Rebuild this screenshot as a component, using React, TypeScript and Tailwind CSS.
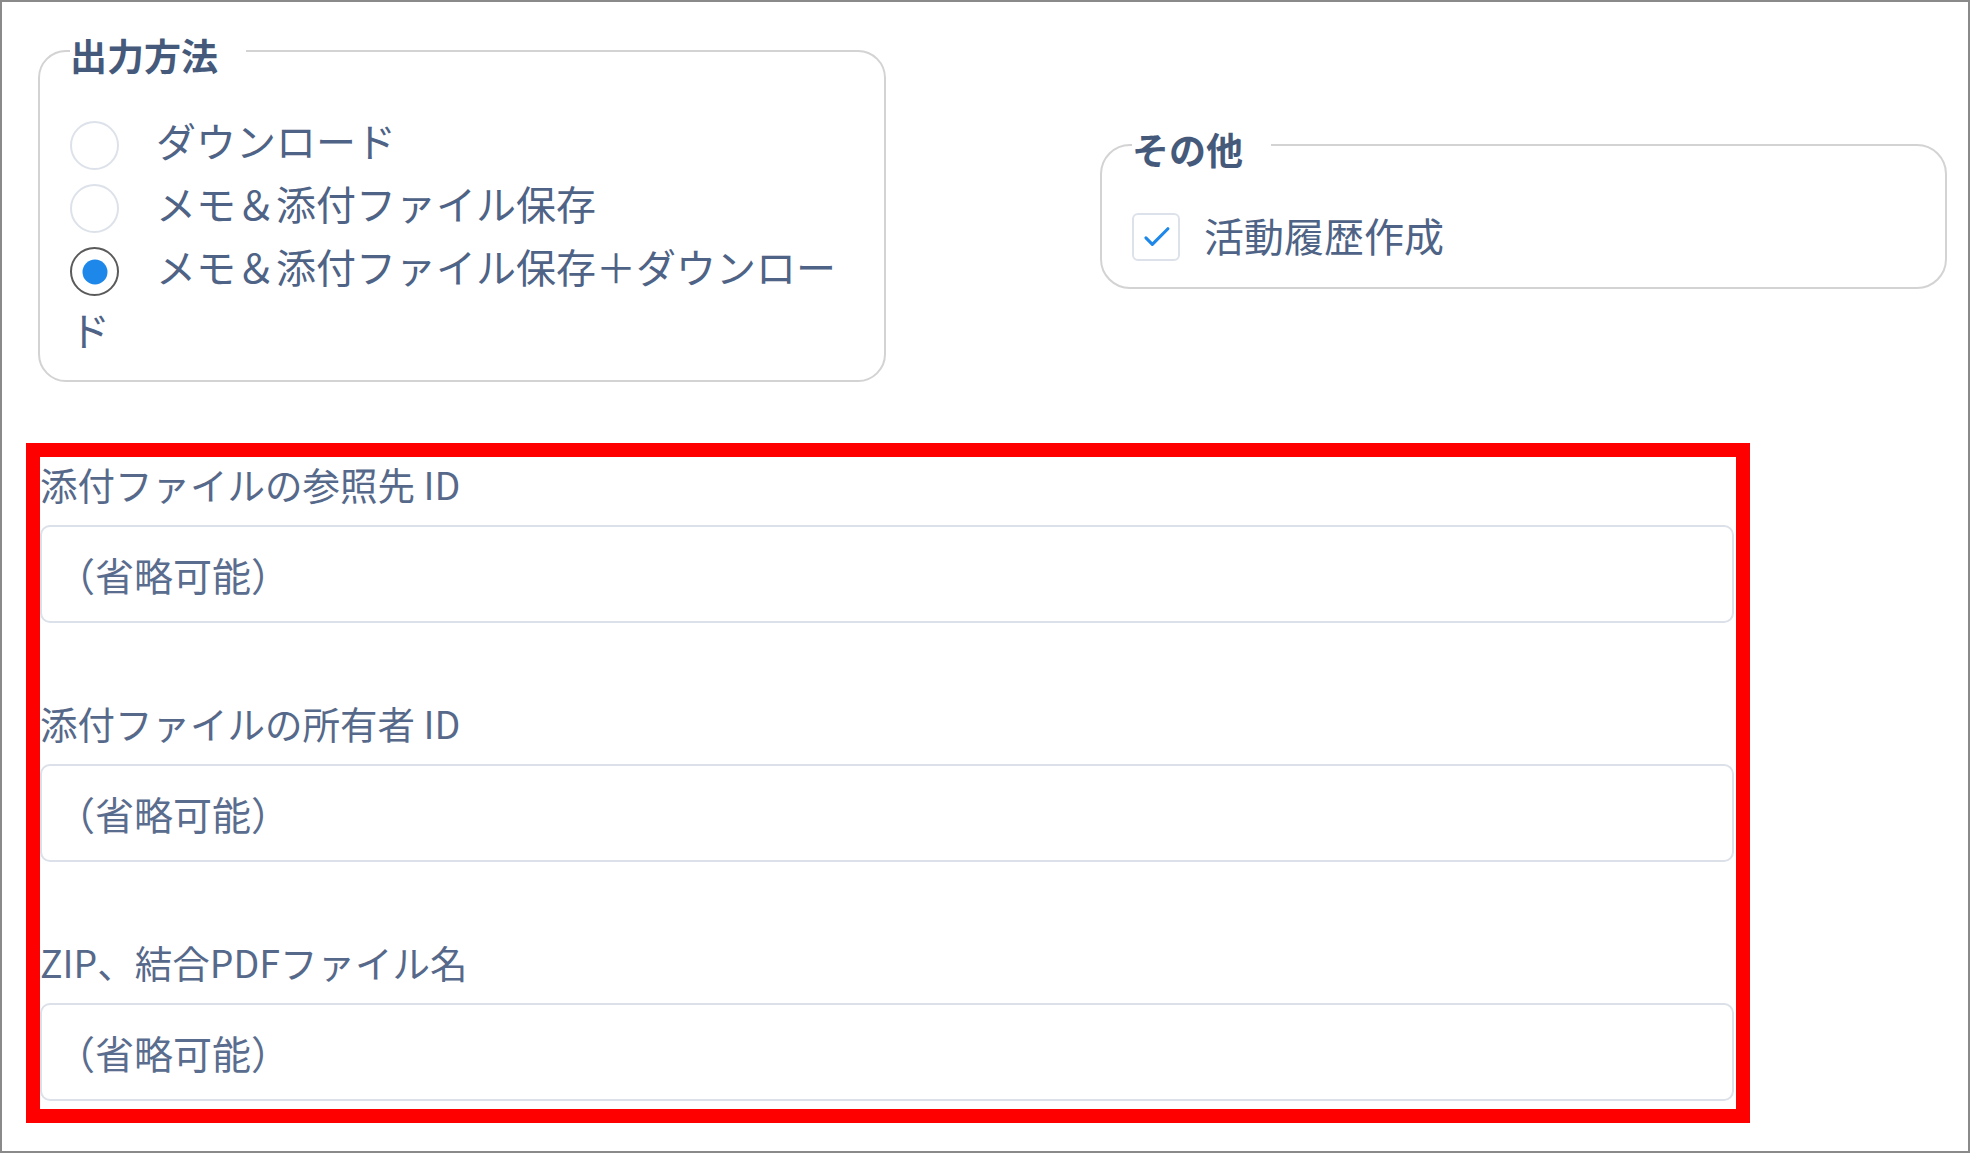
import React from "react";

const FONT = "[font-family:'Noto_Sans_CJK_JP','Noto_Sans',sans-serif]";

function Radio({ checked }: { checked?: boolean }) {
  return checked ? (
    <span className="relative inline-block align-[-13px] w-[49px] h-[49px] rounded-full border-2 border-[#5a5a5a] bg-white mr-[37px]">
      <span className="absolute left-1/2 top-1/2 w-[25px] h-[25px] -translate-x-1/2 -translate-y-1/2 rounded-full bg-[#1d87ea]" />
    </span>
  ) : (
    <span className="inline-block align-[-13px] w-[49px] h-[49px] rounded-full border-2 border-[#dde2ea] bg-white mr-[37px]" />
  );
}

function Field({ label, first }: { label: string; first?: boolean }) {
  return (
    <div className={first ? "" : "mt-[78px]"}>
      <div className="text-[37.5px] leading-[44px] text-[#56698a] mb-[19px] whitespace-nowrap">{label}</div>
      <input
        className={`${FONT} block w-full h-[98px] border-2 border-[#dbe0e9] rounded-[10px] bg-white pl-[14px] text-[39px] text-[#56698a] placeholder:text-[#5a6d8e] outline-none`}
        placeholder="（省略可能）"
      />
    </div>
  );
}

export default function App() {
  return (
    <div
      className={`${FONT} box-border w-[1970px] h-[1153px] border-2 border-[#8a8a8a] bg-white pl-[24px] pr-[21px] pt-[18px] overflow-hidden`}
    >
      <div className="flex items-center justify-between pl-[12px]">
        <fieldset className="w-[848px] border-2 border-[#d3d3d3] rounded-[28px] px-[30px] pt-[27px] pb-[19px] m-0">
          <legend className="pt-[8px] pl-0 pr-[28px] text-[37px] leading-[54px] font-bold text-[#45597b]">
            出力方法
          </legend>
          <div className="text-[40px] leading-[63px] text-[#4e6385]">
            <Radio />
            ダウンロード
          </div>
          <div className="text-[40px] leading-[63px] text-[#4e6385]">
            <Radio />
            メモ＆添付ファイル保存
          </div>
          <div className="text-[40px] leading-[63px] text-[#4e6385]">
            <Radio checked />
            メモ＆添付ファイル保存＋ダウンロード
          </div>
        </fieldset>

        <fieldset className="w-[847px] border-2 border-[#d3d3d3] rounded-[30px] px-[30px] pt-[30px] pb-[18px] m-0">
          <legend className="pt-[8px] pl-0 pr-[28px] text-[37px] leading-[54px] font-bold text-[#45597b]">
            その他
          </legend>
          <div className="flex items-center h-[63px]">
            <span className="flex items-center justify-center w-[48px] h-[48px] rounded-[6px] border-2 border-[#dde2ea] bg-white mr-[24px]">
              <svg width="48" height="48" viewBox="0 0 48 48" className="block">
                <polyline
                  points="13,25 20,32 37,15"
                  fill="none"
                  stroke="#1d87ea"
                  strokeWidth="3.4"
                  strokeLinecap="round"
                  strokeLinejoin="round"
                />
              </svg>
            </span>
            <span className="text-[40px] leading-[63px] text-[#4e6385] -mt-[4px]">活動履歴作成</span>
          </div>
        </fieldset>
      </div>

      <div className="mt-[61px] w-[1724px] border-[14px] border-[#ff0000] pt-[5px] pb-[8px] pr-[2px]">
        <Field label="添付ファイルの参照先 ID" first />
        <Field label="添付ファイルの所有者 ID" />
        <Field label="ZIP、結合PDFファイル名" />
      </div>
    </div>
  );
}
